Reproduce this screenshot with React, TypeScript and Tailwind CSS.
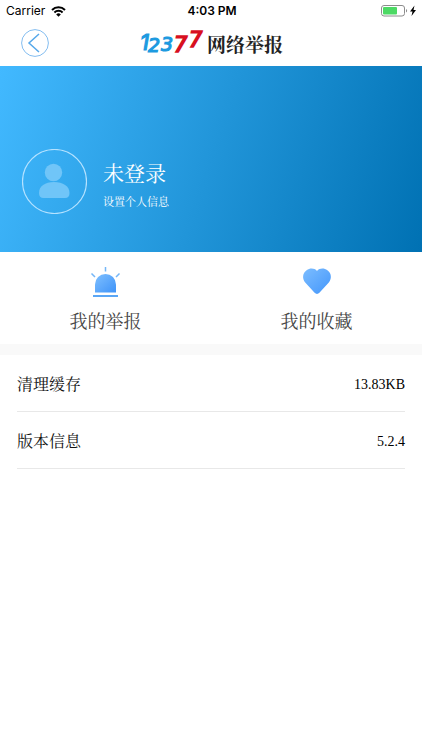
import React from 'react';

interface Shortcut {
  label: string;
  href: string;
  icon: React.ReactNode;
}

interface Setting {
  label: string;
  value: string;
}

const SirenIcon = () => (
  <svg width="32" height="32" viewBox="0 0 32 32" fill="none" aria-hidden="true">
    <defs>
      <linearGradient id="siren" x1="0" y1="0" x2="1" y2="1">
        <stop offset="0" stopColor="#7fc0ff" />
        <stop offset="1" stopColor="#3f93f8" />
      </linearGradient>
    </defs>
    <path d="M5 26.500V18.500A10.500 10.500 0 0 1 26 18.500V26.500Z" fill="url(#siren)" />
    <path d="M3 30H28" stroke="#5aa6f5" strokeWidth="2" />
    <path d="M15.500 1V5.500M1.500 7.500L5 11M29.500 7.500L26 11" stroke="#74b6f7" strokeWidth="1.500" />
  </svg>
);

const HeartIcon = () => (
  <svg width="32" height="32" viewBox="0 0 32 32" aria-hidden="true">
    <defs>
      <linearGradient id="heart" x1="0" y1="0" x2="1" y2="1">
        <stop offset="0" stopColor="#7cbdff" />
        <stop offset="1" stopColor="#4396fb" />
      </linearGradient>
    </defs>
    <path
      d="M16 5C13.500 2 9 1.800 5.600 4.200C1.500 7 1 12.500 4.200 16.500L13.600 26.800C15 28.300 17 28.300 18.400 26.800L27.800 16.500C31 12.500 30.500 7 26.400 4.200C23 1.800 18.500 2 16 5Z"
      fill="url(#heart)"
    />
  </svg>
);

const shortcuts: Shortcut[] = [
  { label: '我的举报', href: '#reports', icon: <SirenIcon /> },
  { label: '我的收藏', href: '#favorites', icon: <HeartIcon /> }
];

const settings: Setting[] = [
  { label: '清理缓存', value: '13.83KB' },
  { label: '版本信息', value: '5.2.4' }
];

const StatusBar = () => (
  <div className="grid h-5 grid-cols-3 items-center pl-1.5 pr-1 pt-0.5 font-['Inter',sans-serif] text-xs text-black">
    <div className="flex items-center gap-1.5">
      <span>Carrier</span>
      <svg width="15" height="11" viewBox="0 0 15 11" aria-hidden="true">
        <path d="M1 4A9.200 9.200 0 0 1 14 4" fill="none" stroke="#000" strokeWidth="2" />
        <path d="M3.400 6.500A5.800 5.800 0 0 1 11.600 6.500" fill="none" stroke="#000" strokeWidth="1.900" />
        <path d="M7.500 10.800L5.200 8.400A3.200 3.200 0 0 1 9.800 8.400Z" />
      </svg>
    </div>
    <span className="text-center font-semibold">4:03 PM</span>
    <svg width="37" height="12" viewBox="0 0 37 12" className="justify-self-end" aria-hidden="true">
      <rect x="0.500" y="0.500" width="23" height="10.500" rx="2.500" fill="none" stroke="#8c8c8c" />
      <rect x="2" y="2" width="14" height="7.500" rx="1" fill="#4cd964" />
      <path d="M25 4C26.500 4.500 26.500 7 25 7.500Z" fill="#8c8c8c" />
      <path d="M33.500 0.500L29 6.500H31.500L30.500 11L35 5H32.500Z" />
    </svg>
  </div>
);

const Logo = () => (
  <svg width="68" height="28" viewBox="0 0 68 28" role="img" aria-label="12377">
    <g
      fontFamily="DejaVu Sans, sans-serif"
      fontStyle="italic"
      fontWeight="400"
      fontSize="19"
      fill="#1c9ae0"
      stroke="#1c9ae0"
      strokeWidth="1.200"
    >
      <text x="1" y="21" fontFamily="Inter, sans-serif" fontSize="22">1</text>
      <text x="9" y="23">2</text>
      <text x="22" y="22">3</text>
      <g fill="#d8101f" stroke="#d8101f" fontSize="21" strokeWidth="1.600">
        <text x="35" y="23">7</text>
        <text x="50" y="18">7</text>
      </g>
    </g>
  </svg>
);

const Header = () => (
  <header className="grid h-[46px] grid-cols-[49px_1fr_49px] items-center">
    <button type="button" aria-label="返回" className="justify-self-end">
      <svg width="28" height="28" viewBox="0 0 28 28" fill="none" stroke="#56a8ea">
        <circle cx="14" cy="14" r="13.400" stroke="#83bdf0" />
        <path d="M18 5L8 14L18 23" strokeWidth="1.500" />
      </svg>
    </button>
    <h1 className="flex items-center justify-center text-[19px] leading-none font-bold text-[#222]">
      <Logo />
      <span className="pt-1">网络举报</span>
    </h1>
  </header>
);

const Profile = () => (
  <section className="bg-[linear-gradient(108deg,#42b9ff,#0071b3)] px-[22px] pb-[38px] pt-[83px] text-white">
    <a href="#profile" className="flex items-center gap-4">
      <svg width="65" height="65" viewBox="0 0 65 65" aria-hidden="true">
        <circle cx="32.500" cy="32.500" r="32" fill="none" stroke="#b5e2ff" strokeWidth="1.200" />
        <g fill="#70c5f8">
          <circle cx="31.500" cy="23.500" r="8.700" />
          <path d="M17 44C17 37 23 33 32 33S47.500 37 47.500 44C47.500 47.500 46 49 43 49H21.500C18.500 49 17 47.500 17 44Z" />
        </g>
      </svg>
      <span className="flex flex-col gap-1 pt-1">
        <span className="text-[21px] leading-8">未登录</span>
        <span className="text-[11px] leading-4">设置个人信息</span>
      </span>
    </a>
  </section>
);

const App = () => {
  return (
    <main className="min-h-screen bg-white font-['Liberation_Serif','Noto_Serif_CJK_SC','Noto_Sans_CJK_SC',serif] text-[#111]">
      <StatusBar />
      <Header />
      <Profile />

      <nav className="grid grid-cols-2 pb-2 pt-3.5">
        {shortcuts.map((item) => (
          <a key={item.label} href={item.href} className="flex flex-col items-center gap-2.5 text-lg text-[#444]">
            {item.icon}
            <span>{item.label}</span>
          </a>
        ))}
      </nav>

      <section className="border-t-[11px] border-[#f9f9f9] px-[17px]">
        {settings.map((item) => (
          <button
            key={item.label}
            type="button"
            className="flex h-[57px] w-full items-center justify-between border-b border-[#e8e8e8] pt-1 text-base"
          >
            <span>{item.label}</span>
            <span className="text-sm text-black">{item.value}</span>
          </button>
        ))}
      </section>
    </main>
  );
};

export default App;
